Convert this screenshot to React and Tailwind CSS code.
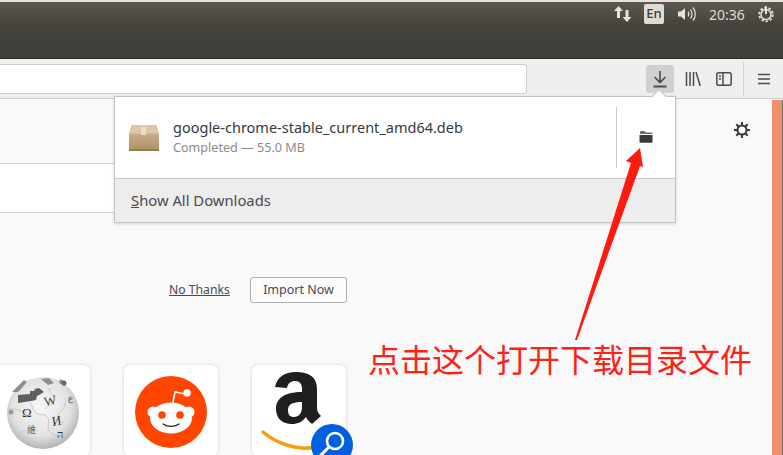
import React from "react";

const ui = { fontFamily: '"Noto Sans", "Open Sans", sans-serif' };

function Wiki() {
  return (
    <svg width="80" height="80" viewBox="0 0 80 80">
      <defs>
        <radialGradient id="g" cx="48%" cy="42%" r="62%">
          <stop offset="0" stopColor="#f7f7f7" />
          <stop offset="0.65" stopColor="#e2e2e2" />
          <stop offset="1" stopColor="#a8a8a8" />
        </radialGradient>
      </defs>
      <circle cx="40" cy="38" r="36" fill="url(#g)" />
      <path d="M15 20l12-1v-3l4 0 1-2 4-1 5 4-5 3-2 1-1 4-5 1-13 2z" fill="#5f5f5f" />
      <path d="M9 17l12-12 3 2-7 8-2 2zM38 4l8-1 5 5-6 2zM57 4l6 3-1 4-6-3z" fill="#8f8f8f" />
      <path d="M27 27c3 5 2 8 6 11s9 0 12 5-3 9 2 14 10 2 13 7M46 13c0 6 6 6 6 11s-8 6-10 10M66 22c-5 4-3 10-8 14s-2 10 3 12M6 34c8-2 10 4 18 2M14 60c6-4 10-6 18-4" fill="none" stroke="#c8c8c8" strokeWidth="1" />
      <text x="19" y="42" fontSize="13" fontFamily="Liberation Serif" fill="#333">Ω</text>
      <text x="41" y="30" fontSize="13" fontFamily="Liberation Serif" fill="#444" transform="rotate(-12 47 26)">W</text>
      <text x="49" y="50" fontSize="13" fontFamily="Liberation Serif" fill="#333" transform="rotate(-8 54 46)">И</text>
      <text x="24" y="58" fontSize="9" fontFamily="Noto Sans CJK SC" fill="#666">維</text>
      <text x="54" y="63" fontSize="11" fontFamily="Liberation Serif" fill="#333">ה</text>
      <text x="65" y="26" fontSize="9" fontFamily="Liberation Serif" fill="#555">ع</text>
      <circle cx="8" cy="37" r="2.500" fill="#9a9a9a" />
      <circle cx="61" cy="8" r="2.500" fill="#666" />
    </svg>
  );
}

function Reddit() {
  return (
    <svg width="72" height="72" viewBox="0 0 72 72">
      <circle cx="36" cy="36" r="36" fill="#ff4500" />
      <path d="M36 36l4-20 15 3" fill="none" stroke="#fff" strokeWidth="1.6" />
      <circle cx="52" cy="17" r="3.8" fill="#fff" />
      <circle cx="18" cy="36" r="5.5" fill="#fff" />
      <circle cx="54" cy="36" r="5.5" fill="#fff" />
      <ellipse cx="36" cy="42" rx="21" ry="15.5" fill="#fff" />
      <circle cx="27" cy="39" r="3.8" fill="#ff4500" />
      <circle cx="45" cy="39" r="3.8" fill="#ff4500" />
      <path d="M28 48c5 3 11 3 16 0" fill="none" stroke="#222" strokeWidth="1.4" strokeLinecap="round" />
    </svg>
  );
}

function Amazon() {
  return (
    <svg width="94" height="91" viewBox="0 0 94 91" className="overflow-visible">
      <g transform="translate(8 0)">
        <path d="M36 7c13 0 21 5 21 17v19c0 4 2 6 4 8l-9 8c-3-2-5-5-6-7-4 5-8 7-14 7-9 0-16-5-16-15 0-11 9-17 26-17v-3c0-5-2-8-7-8-4 0-7 2-8 7l-12-1C17 12 25 7 36 7zm6 30c-9 0-14 2-14 8 0 5 2 7 6 7 5 0 8-4 8-10z" fill="#1f1f1f" />
      </g>
      <path d="M11 67c14 12 36 19 52 15" fill="none" stroke="#f79c0a" strokeWidth="3.5" strokeLinecap="round" />
      <circle cx="80" cy="80" r="21" fill="#0060df" />
      <circle cx="83" cy="76" r="8" fill="none" stroke="#fff" strokeWidth="2.6" />
      <path d="M77 82l-9 9" stroke="#fff" strokeWidth="3" />
    </svg>
  );
}

function Card({ children, className }) {
  return (
    <div className={"w-[94px] h-[91px] shrink-0 bg-white rounded-[6px] shadow-[0_0_3px_rgba(12,12,13,0.18)] flex justify-center " + className}>
      {children}
    </div>
  );
}

export default function App() {
  return (
    <div className="relative w-[783px] h-[455px] overflow-hidden bg-[#f9f9fa]" style={ui}>
      {/* window title bar */}
      <div className="h-[2px] bg-[#e4e3df]" />
      <div className="h-[57px] bg-[linear-gradient(#5c584f,#46443d_40%,#3e3d38)] flex justify-end items-start border-b border-[#2e2d2a]">
        <div className="flex items-center h-[24px] text-[#dfdbd2]">
          <svg width="20" height="18" viewBox="0 0 20 18" className="mr-[11px]">
            <path d="M5.500 1L1 6h3v7h3V6h3zM14 17l4.500-5h-3V5h-3v7h-3z" fill="#e6e3dc" />
          </svg>
          <div className="w-[20px] h-[20px] rounded-[2px] bg-[#dfdbd2] text-[#3c3b37] text-[13px] font-medium flex items-center justify-center mr-[13px]">En</div>
          <svg width="20" height="16" viewBox="0 0 20 16" className="mr-[12px]" fill="none">
            <path d="M1 5.500h3L8 2v12l-4-3.500H1z" fill="#e6e3dc" />
            <path d="M11 5.500c1 1.500 1 3.500 0 5M13.500 3.500c2 2.500 2 6.500 0 9M16 1.500c3 3.500 3 9.500 0 13" stroke="#e6e3dc" strokeWidth="1.200" />
          </svg>
          <span className="text-[14px] w-[37px] mr-[11px] text-[#dfdbd2] whitespace-nowrap">20:36</span>
          <svg width="18" height="18" viewBox="0 0 18 18" className="mr-[8px]" fill="none">
            <circle cx="9" cy="9.500" r="6.800" stroke="#e6e3dc" strokeWidth="1.800" strokeDasharray="2.500 1.800" />
            <circle cx="9" cy="9.500" r="5" stroke="#e6e3dc" strokeWidth="1.500" />
            <path d="M9 1v8" stroke="#e6e3dc" strokeWidth="2" />
          </svg>
        </div>
      </div>

      {/* toolbar */}
      <div className="h-[40px] bg-[#f0efed] border-b border-[#cfcdc8] flex items-center">
        <div className="w-[527px] h-[30px] bg-white border border-[#cfcdc9] border-l-0 rounded-r-[3px]" />
        <div className="flex items-center ml-[119px] h-full">
          <div className="w-[28px] h-[28px] rounded-[3px] bg-[#d1d0ce] flex items-center justify-center">
            <svg width="16" height="18" viewBox="0 0 16 18" fill="none" stroke="#4a4a4f" strokeWidth="1.600">
              <path d="M8 1v11M2.500 7l5.500 5.500L13.500 7" />
              <path d="M1.500 16.500h13" strokeWidth="2" />
            </svg>
          </div>
          <svg width="16" height="14" viewBox="0 0 16 14" className="ml-[11px]" fill="none" stroke="#4a4a4f" strokeWidth="1.500">
            <path d="M1.500 0v14M5 0v14M8.500 0v14M11 0l4.200 14" />
          </svg>
          <svg width="16" height="14" viewBox="0 0 16 14" className="ml-[15px]" fill="none" stroke="#4a4a4f" strokeWidth="1.500">
            <rect x="0.800" y="0.800" width="14.400" height="12.400" rx="2" />
            <path d="M7 1v12M3 4h2M3 7h2" />
          </svg>
          <div className="w-px h-[34px] bg-[#d4d3d0] ml-[11px]" />
          <svg width="14" height="12" viewBox="0 0 14 12" className="ml-[13px]" stroke="#4a4a4f" strokeWidth="1.600">
            <path d="M1 1.500h12M1 6h12M1 10.500h12" />
          </svg>
        </div>
      </div>

      {/* page content */}
      <div className="flex h-[356px]">
        <div className="w-[772px] shrink-0">
          <div className="flex justify-end pt-[22px] pr-[21px]">
            <svg width="18" height="18" viewBox="0 0 18 18" fill="none" stroke="#3a3a3d">
              <circle cx="9" cy="9" r="4.500" strokeWidth="2" />
              <path d="M9 1v3M9 14v3M1 9h3M14 9h3M3.300 3.300l2.200 2.200M12.500 12.500l2.200 2.200M14.700 3.300l-2.200 2.200M5.500 12.500l-2.200 2.200" strokeWidth="2" />
            </svg>
          </div>
          <div className="w-[130px] h-[50px] mt-[24px] bg-white border-y border-[#d0d0d0]" />
          <div className="flex items-center h-[28px] mt-[63px] ml-[169px]">
            <span className="text-[12.2px] text-[#4a4a4f] underline w-[61px] whitespace-nowrap">No Thanks</span>
            <button className="ml-[20px] w-[97px] h-[26px] bg-[#fbfbfb] border border-[#b1b1b3] rounded-[3px] text-[12.5px] text-[#4a4a4f]">Import Now</button>
          </div>
          <div className="flex gap-[34px] ml-[-4px] mt-[61px]">
            <Card className="pt-[10px]"><Wiki /></Card>
            <Card className="pt-[11px]"><Reddit /></Card>
            <Card className=""><Amazon /></Card>
          </div>
        </div>
        <div className="w-[10px] mt-[1px] bg-[#f2906a]" />
        <div className="w-px mt-[1px] bg-[#6b6b6b]" />
      </div>

      {/* downloads popup */}
      <div className="absolute left-[114px] top-[96px] w-[562px] h-[127px] bg-white border border-[#c4c4c2] shadow-[0_1px_3px_rgba(0,0,0,0.15)] flex flex-col">
        <div className="absolute right-[11px] top-[-6px] w-[10px] h-[10px] rotate-45 bg-white border-l border-t border-[#c4c4c2]" />
        <div className="h-[81px] flex items-center shrink-0">
          <svg width="32" height="28" viewBox="0 0 32 28" className="ml-[13px] shrink-0">
            <defs>
              <linearGradient id="box" x1="0" y1="0" x2="0" y2="1">
                <stop offset="0" stopColor="#d6bd97" />
                <stop offset="1" stopColor="#ad8f63" />
              </linearGradient>
            </defs>
            <path d="M4 1h24l3 8v17l-1 1H2l-1-1V9z" fill="url(#box)" />
            <path d="M1 9.500L4 1h24l3 8.500z" fill="#dcc7a6" />
            <rect x="13" y="3" width="5" height="8" fill="#e9dcc5" />
            <rect x="1" y="25" width="30" height="2" fill="#957a52" />
          </svg>
          <div className="ml-[13px] flex flex-col w-[443px]">
            <span className="text-[14.5px] leading-[20px] -mt-[1px] text-[#38383d] whitespace-nowrap">google-chrome-stable_current_amd64.deb</span>
            <span className="text-[12.6px] leading-[18px] mt-[2px] text-[#8a8a8d] whitespace-nowrap">Completed — 55.0 MB</span>
          </div>
          <div className="w-px h-[61px] bg-[#c9c9c9]" />
          <div className="flex-1 flex justify-center mb-[2px]">
            <svg width="14" height="13" viewBox="0 0 14 13">
              <path d="M1 2.500C1 1.500 1.500 1 2.500 1h3l1.500 1.500h5c1 0 1.500.5 1.500 1.500H1z" fill="#6a6a6a" />
              <path d="M0.500 5h13v6.500c0 .8-.5 1.300-1.300 1.300H1.800C1 12.800.5 12.300.5 11.500z" fill="#38383d" />
            </svg>
          </div>
        </div>
        <div className="flex-1 bg-[#ededed] border-t border-[#c8c8c8] flex items-center pl-[16px] text-[14.8px] text-[#4a4a4f]">
          <span><span className="underline">S</span>how All Downloads</span>
        </div>
      </div>

      {/* red annotation */}
      <svg width="783" height="455" viewBox="0 0 783 455" className="absolute inset-0 pointer-events-none">
        <path d="M640 148L626 161 631 163 575 340 577 340 640 166 643 167z" fill="#ff1a10" />
      </svg>
      <div
        className="absolute left-[368px] top-[338px] text-[32px] leading-[40px] text-[#ff2116] whitespace-nowrap"
        style={{ fontFamily: '"Noto Sans CJK SC", sans-serif' }}
      >
        点击这个打开下载目录文件
      </div>
    </div>
  );
}
